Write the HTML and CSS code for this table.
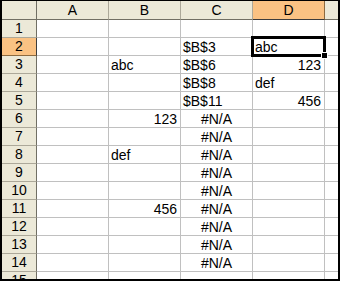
FILE: index.html
```html
<!DOCTYPE html>
<html>
<head>
<meta charset="utf-8">
<link rel="stylesheet" href="styles.css">
</head>
<body>
<div class="sheet">
  <div class="grid">
    <div class="corner"></div>
    <div class="ch">A</div>
    <div class="ch">B</div>
    <div class="ch">C</div>
    <div class="ch sel">D</div>
    <div class="ch last"></div>

    <div class="rh">1</div><div class="c"></div><div class="c"></div><div class="c"></div><div class="c"></div><div class="c e"></div>
    <div class="rh sel">2</div><div class="c"></div><div class="c"></div><div class="c">$B$3</div><div class="c">abc</div><div class="c e"></div>
    <div class="rh">3</div><div class="c"></div><div class="c">abc</div><div class="c">$B$6</div><div class="c r">123</div><div class="c e"></div>
    <div class="rh">4</div><div class="c"></div><div class="c"></div><div class="c">$B$8</div><div class="c">def</div><div class="c e"></div>
    <div class="rh">5</div><div class="c"></div><div class="c"></div><div class="c">$B$11</div><div class="c r">456</div><div class="c e"></div>
    <div class="rh">6</div><div class="c"></div><div class="c r">123</div><div class="c m">#N/A</div><div class="c"></div><div class="c e"></div>
    <div class="rh">7</div><div class="c"></div><div class="c"></div><div class="c m">#N/A</div><div class="c"></div><div class="c e"></div>
    <div class="rh">8</div><div class="c"></div><div class="c">def</div><div class="c m">#N/A</div><div class="c"></div><div class="c e"></div>
    <div class="rh">9</div><div class="c"></div><div class="c"></div><div class="c m">#N/A</div><div class="c"></div><div class="c e"></div>
    <div class="rh">10</div><div class="c"></div><div class="c"></div><div class="c m">#N/A</div><div class="c"></div><div class="c e"></div>
    <div class="rh">11</div><div class="c"></div><div class="c r">456</div><div class="c m">#N/A</div><div class="c"></div><div class="c e"></div>
    <div class="rh">12</div><div class="c"></div><div class="c"></div><div class="c m">#N/A</div><div class="c"></div><div class="c e"></div>
    <div class="rh">13</div><div class="c"></div><div class="c"></div><div class="c m">#N/A</div><div class="c"></div><div class="c e"></div>
    <div class="rh">14</div><div class="c"></div><div class="c"></div><div class="c m">#N/A</div><div class="c"></div><div class="c e"></div>
    <div class="rh">15</div><div class="c"></div><div class="c"></div><div class="c"></div><div class="c"></div><div class="c e"></div>
  </div>
  <div class="active"><span class="handle"></span></div>
</div>
</body>
</html>
```
FILE: styles.css
```css
html, body {
  margin: 0;
  padding: 0;
  background: #fff;
}
.sheet {
  position: relative;
  width: 340px;
  height: 281px;
  box-sizing: border-box;
  border-top: 1px solid #000;
  border-left: 2px solid #000;
  border-right: 2px solid #000;
  border-bottom: 2px solid #000;
  overflow: hidden;
  font-family: "Liberation Sans", Arial, sans-serif;
  font-size: 14px;
  color: #000;
}
.grid {
  display: grid;
  grid-template-columns: 35px repeat(4, 72px) 13px;
  grid-template-rows: 19px;
  grid-auto-rows: 18px;
}
.grid > div {
  box-sizing: border-box;
  white-space: nowrap;
  overflow: hidden;
}
.corner, .ch, .rh {
  background: #ece9d8;
  border-right: 1px solid #aca899;
  border-bottom: 1px solid #aca899;
  text-align: center;
}
.corner {
  border-right-color: #716f64;
  border-bottom-color: #716f64;
}
.ch {
  line-height: 18px;
  border-bottom-color: #716f64;
}
.ch.last {
  border-right: none;
}
.rh {
  line-height: 17px;
  border-right-color: #716f64;
}
.ch.sel, .rh.sel {
  background: #fac283;
}
.ch.sel {
  border-bottom-color: #3c3c3c;
  border-right-color: #8c6a40;
}
.rh.sel {
  border-right-color: #3c3c3c;
  border-bottom-color: #8c6a40;
}
.c {
  border-right: 1px solid #c0c0c0;
  border-bottom: 1px solid #c0c0c0;
  line-height: 18px;
  padding: 0 2px;
  text-align: left;
}
.c.e {
  border-right: none;
}
.c.r {
  text-align: right;
  padding-right: 3px;
}
.c.m {
  text-align: center;
}
.active {
  position: absolute;
  left: 249px;
  top: 35px;
  width: 75px;
  height: 21px;
  box-sizing: border-box;
  border: 3px solid #000;
}
.handle {
  position: absolute;
  right: -5px;
  bottom: -5px;
  width: 5px;
  height: 5px;
  background: #000;
  border: 1px solid #fff;
}
```
